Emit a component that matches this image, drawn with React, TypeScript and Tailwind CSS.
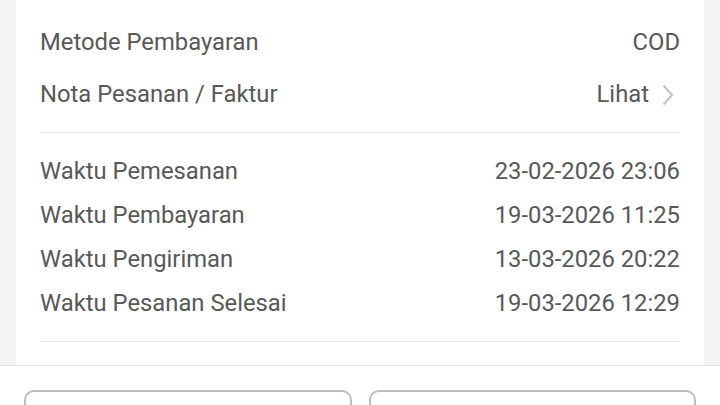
import React from "react";

const Row = ({ label, value, h }: { label: string; value: React.ReactNode; h: string }) => (
  <div className={`flex items-center justify-between ${h}`}>
    <span>{label}</span>
    <span className="flex items-center">{value}</span>
  </div>
);

export default function App() {
  return (
    <div
      className="w-[720px] h-[405px] overflow-hidden bg-[#f5f5f5] flex flex-col text-[23.8px] text-[#585858]"
      style={{ fontFamily: "Roboto, 'Noto Sans', sans-serif" }}
    >
      <div className="mx-4 bg-white px-6 pt-[17px] h-[365px] shrink-0">
        <Row label="Metode Pembayaran" value="COD" h="h-[52px]" />
        <Row
          label="Nota Pesanan / Faktur"
          h="h-[52px]"
          value={
            <>
              <span>Lihat</span>
              <svg width="12" height="22" viewBox="0 0 12 22" className="ml-[13px] mr-[6px]">
                <path d="M1.5 1.5 L10 11 L1.5 20.5" fill="none" stroke="#c2c2c2" strokeWidth="2" />
              </svg>
            </>
          }
        />
        <div className="mt-[11px] h-px bg-[#e8e8e8]" />
        <div className="pt-[17px]">
          <Row label="Waktu Pemesanan" value="23-02-2026 23:06" h="h-[44px]" />
          <Row label="Waktu Pembayaran" value="19-03-2026 11:25" h="h-[44px]" />
          <Row label="Waktu Pengiriman" value="13-03-2026 20:22" h="h-[44px]" />
          <Row label="Waktu Pesanan Selesai" value="19-03-2026 12:29" h="h-[44px]" />
        </div>
        <div className="mt-[15px] h-px bg-[#e8e8e8]" />
      </div>
      <div className="flex-1 bg-white border-t border-[#e3e3e3] flex gap-[17px] px-6 pt-6">
        <div className="flex-1 h-[60px] rounded-[10px] border-2 border-[#bdbdbd]" />
        <div className="flex-1 h-[60px] rounded-[10px] border-2 border-[#bdbdbd]" />
      </div>
    </div>
  );
}
